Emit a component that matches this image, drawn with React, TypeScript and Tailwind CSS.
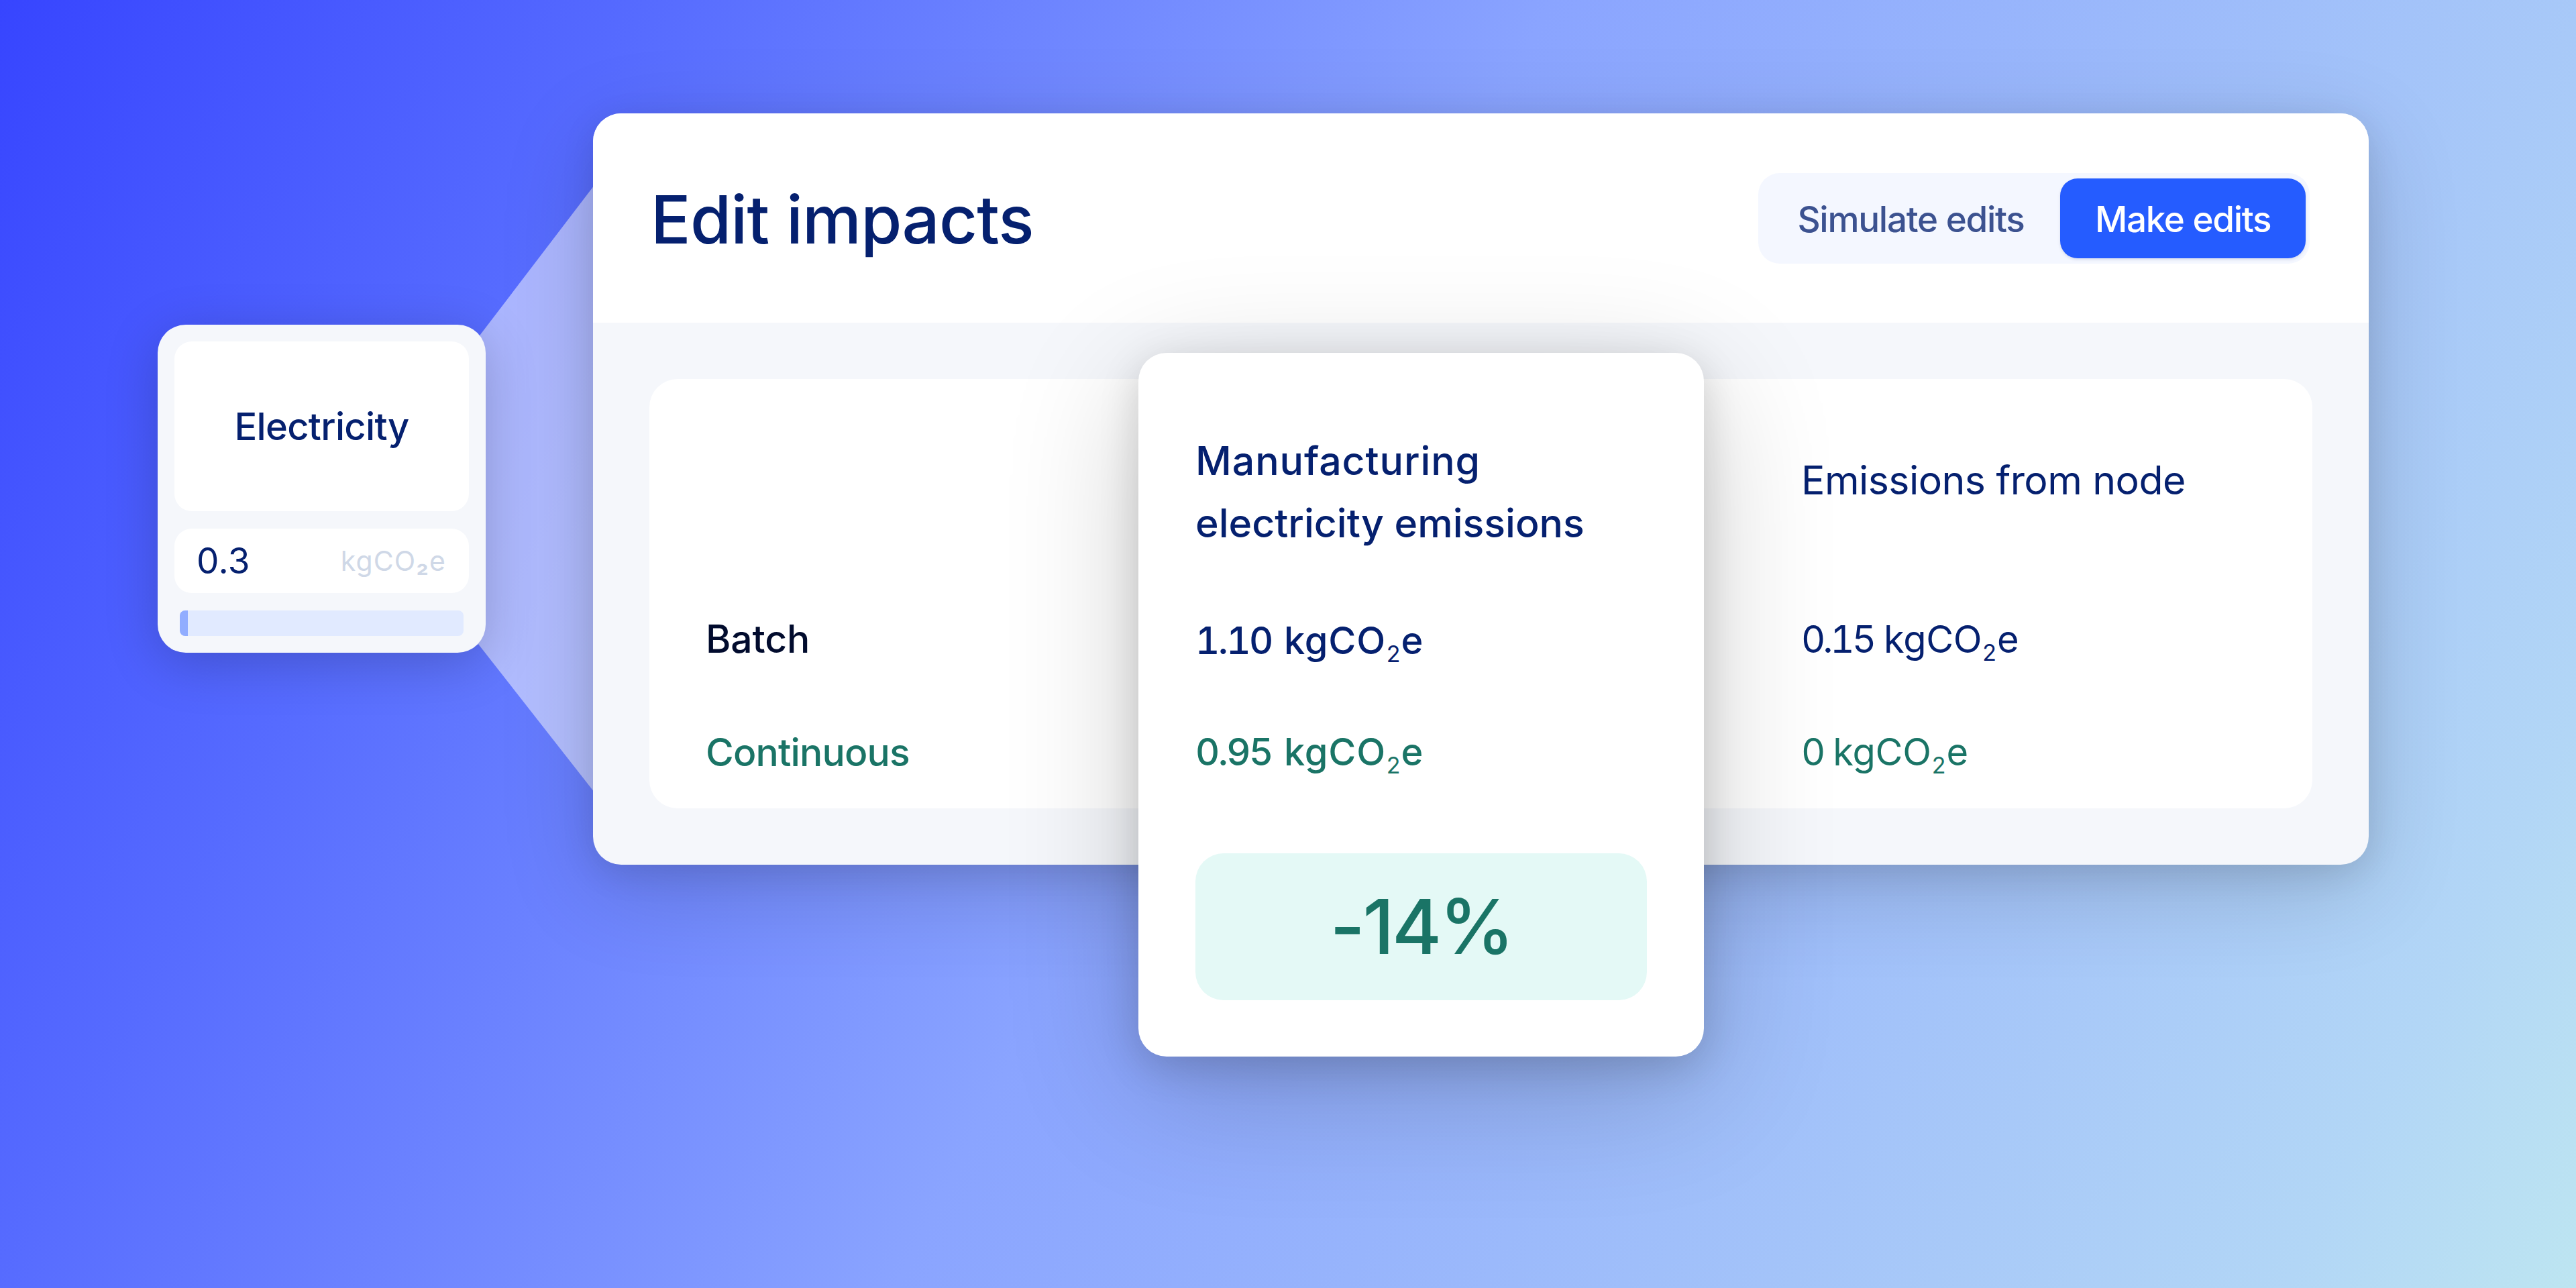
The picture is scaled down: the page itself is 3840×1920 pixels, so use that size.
import React from "react";

type Value = { amount: string; bold?: boolean; className?: string };

const KgCO2e: React.FC<Value> = ({ amount, bold = false, className = "" }) => (
    <div className={`flex h-[80px] items-baseline whitespace-pre text-[56px] leading-[80px] ${className}`}>
        <span className={bold ? "mr-[18px] tabular-nums tracking-[-2.5px]" : "mr-[15px] tabular-nums tracking-[-4px]"}>
            {amount}
        </span>
        <span className={bold ? "tracking-[0.8px]" : "tracking-[-0.3px]"}>kgCO</span>
        <span className="relative top-[12px] ml-[1px] text-[34px] font-normal leading-none">2</span>
        <span className="ml-[1px]">e</span>
    </div>
);

const NodeCard: React.FC = () => (
    <div className="relative mt-[315px] flex h-[489px] w-[489px] shrink-0 flex-col rounded-[42px] bg-[#f5f7fb] px-[25px] pt-[25px] shadow-[0_16px_80px_rgba(0,0,0,0.2)]">
        <div className="flex h-[253px] items-center justify-center rounded-[26px] bg-white">
            <span className="text-[56px] font-medium leading-[80px] tracking-[-0.68px] text-[#05206f]">
                Electricity
            </span>
        </div>
        <div className="mt-[26px] flex h-[96px] items-center justify-between rounded-[26px] bg-white pl-[33px] pr-[34px]">
            <span className="text-[53px] leading-[80px] tracking-[0.4px] text-[#05206f]">0.3</span>
            <span className="text-[41px] leading-[80px] tracking-[1.1px] text-[#cfd8e7]">
                kgCO<span className="font-semibold">₂</span>e
            </span>
        </div>
        <div className="mx-[8px] mt-[26px] h-[38px] overflow-hidden rounded-[8px] bg-[#e1eaff]">
            <div className="h-full w-[12px] bg-[#91adff]" />
        </div>
    </div>
);

const ModeToggle: React.FC = () => (
    <div className="flex h-[135px] w-[822px] items-center rounded-[32px] bg-[#f4f7ff] pr-[6px] text-[53px] font-medium leading-[80px]">
        <button type="button" className="flex-1 pl-[5px] pt-[3px] tracking-[-1.28px] text-[#3c5290]">
            Simulate edits
        </button>
        <button
            type="button"
            className="h-[119px] w-[366px] rounded-[26px] bg-[#255cff] pt-[3px] tracking-[-1.33px] text-white shadow-[0_2px_4px_rgba(5,32,111,0.12)]"
        >
            Make edits
        </button>
    </div>
);

const EmissionsCard: React.FC = () => (
    <div className="absolute left-[813px] top-[357px] h-[1049px] w-[843px] rounded-[42px] bg-white px-[85px] pt-[114px] font-medium text-[#05206f] shadow-[0_48px_200px_rgba(0,0,0,0.2),0_16px_60px_rgba(0,0,0,0.15)]">
        <h2 className="text-[59px] leading-[93px]">
            <span className="block tracking-[0.9px]">Manufacturing</span>
            <span className="block">electricity emissions</span>
        </h2>
        <KgCO2e amount="1.10" bold className="mt-[89px]" />
        <KgCO2e amount="0.95" bold className="mt-[86px] text-[#1a7466]" />
        <div className="mt-[111px] flex h-[219px] items-center justify-center rounded-[42px] bg-[#e4f9f6] text-[113px] leading-none tracking-[-3.44px] text-[#1a7466]">
            -14%
        </div>
    </div>
);

const ImpactsPanel: React.FC = () => (
    <div className="relative ml-[160px] h-[1120px] w-[2647px] shrink-0 rounded-[42px] bg-[#f5f7fb] shadow-[0_36px_140px_rgba(0,0,0,0.16),0_12px_50px_rgba(0,0,0,0.1)]">
        <div className="flex h-[312px] items-center justify-between rounded-t-[42px] bg-white pl-[86px] pr-[88px]">
            <h1 className="pt-[4px] text-[99px] font-medium leading-[120px] tracking-[-0.8px] text-[#05206f]">
                Edit impacts
            </h1>
            <ModeToggle />
        </div>

        <div className="mx-[84px] mt-[84px] flex h-[640px] justify-between rounded-[42px] bg-white pl-[84px] pr-[188px]">
            <div className="pt-[348px] text-[57px] font-medium leading-[80px]">
                <div className="tracking-[-0.14px] text-[#010b2d]">Batch</div>
                <div className="mt-[89px] tracking-[-0.84px] text-[#1a7466]">Continuous</div>
            </div>
            <div className="w-[574px] pt-[111px] text-[#05206f]">
                <h2 className="whitespace-nowrap text-[59px] leading-[80px] tracking-[-0.56px]">Emissions from node</h2>
                <KgCO2e amount="0.15" className="mt-[157px]" />
                <KgCO2e amount="0" className="mt-[88px] text-[#1a7466]" />
            </div>
        </div>

        <EmissionsCard />
    </div>
);

const App: React.FC = () => {
    return (
        <main className="relative flex h-[1920px] w-[3840px] items-start overflow-hidden bg-[linear-gradient(117deg,#3745ff_0%,#566bff_20%,#8aa4ff_48%,#a8c9f8_80%,#b2d6f6_91%,#bde5f1_100%)] pl-[235px] pt-[169px] font-['Inter','Liberation_Sans',sans-serif]">
            {/* Beam that links the node to the panel */}
            <svg className="absolute left-0 top-0 h-[1920px] w-[900px]" viewBox="0 0 900 1920">
                <polygon points="886,276 680,546 680,918 886,1181" fill="#fff" fillOpacity="0.5" />
            </svg>
            <NodeCard />
            <ImpactsPanel />
        </main>
    );
};

export default App;
